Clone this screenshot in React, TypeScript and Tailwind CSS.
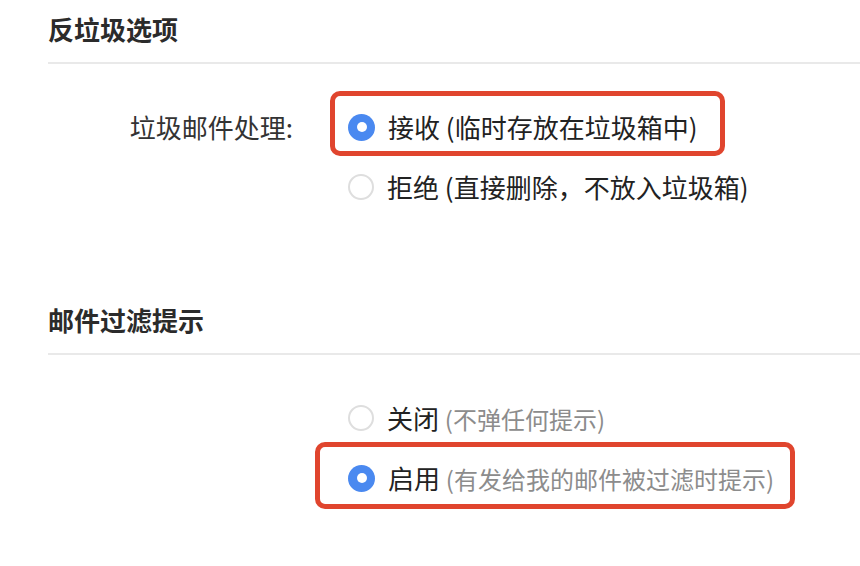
import React from 'react';

type Opt = {
  main: string;
  note: string;
  checked?: boolean;
  muted?: boolean;
  mark?: string;
};

const Radio: React.FC<{ checked?: boolean }> = ({ checked }) =>
  checked ? (
    <span className="flex h-[27px] w-[27px] shrink-0 items-center justify-center rounded-full bg-[#4a89f0]">
      <span className="h-[10px] w-[10px] rounded-full bg-white" />
    </span>
  ) : (
    <span className="h-[26px] w-[26px] shrink-0 rounded-full border-2 border-[#dedede] bg-white" />
  );

const Option: React.FC<Opt> = ({ main, note, checked, muted, mark }) => (
  <div className="relative flex h-[60px] items-center gap-[13px]">
    <Radio checked={checked} />
    <span className="text-[26px] leading-none text-[#222]">
      {main}{' '}
      <span className={muted ? 'text-[24px] text-[#8c8c8c]' : ''}>{note}</span>
    </span>
    {mark && <div className={mark} />}
  </div>
);

const SectionTitle: React.FC<{ children: React.ReactNode }> = ({ children }) => (
  <>
    <h2 className="text-[26px] font-bold leading-[36px] text-[#2b2b2b]">{children}</h2>
    <div className="mt-[15px] h-[2px] bg-[#e9e9e9]" />
  </>
);

export default function App() {
  return (
    <div className="h-[566px] w-[860px] overflow-hidden bg-white pl-12 pt-[11px] font-['Noto_Sans_CJK_SC','Noto_Sans',sans-serif]">
      <SectionTitle>反垃圾选项</SectionTitle>
      <div className="mt-[33px] flex">
        <div className="flex h-[60px] w-[300px] items-center justify-end pr-[55px] text-[26px] leading-none text-[#333]">
          垃圾邮件处理:
        </div>
        <div className="flex flex-col">
          <Option
            main="接收"
            note="(临时存放在垃圾箱中)"
            checked
            mark="pointer-events-none absolute left-[-18px] top-[-6px] h-[65px] w-[395px] rounded-[10px] border-[5px] border-[#e0452e]"
          />
          <Option main="拒绝" note="(直接删除，不放入垃圾箱)" />
        </div>
      </div>

      <div className="mt-[85px]">
        <SectionTitle>邮件过滤提示</SectionTitle>
      </div>
      <div className="mt-[33px] flex flex-col pl-[300px]">
        <Option main="关闭" note="(不弹任何提示)" muted />
        <Option
          main="启用"
          note="(有发给我的邮件被过滤时提示)"
          checked
          muted
          mark="pointer-events-none absolute left-[-33px] top-[-6px] h-[67px] w-[480px] rounded-[10px] border-[5px] border-[#e0452e]"
        />
      </div>
    </div>
  );
}
